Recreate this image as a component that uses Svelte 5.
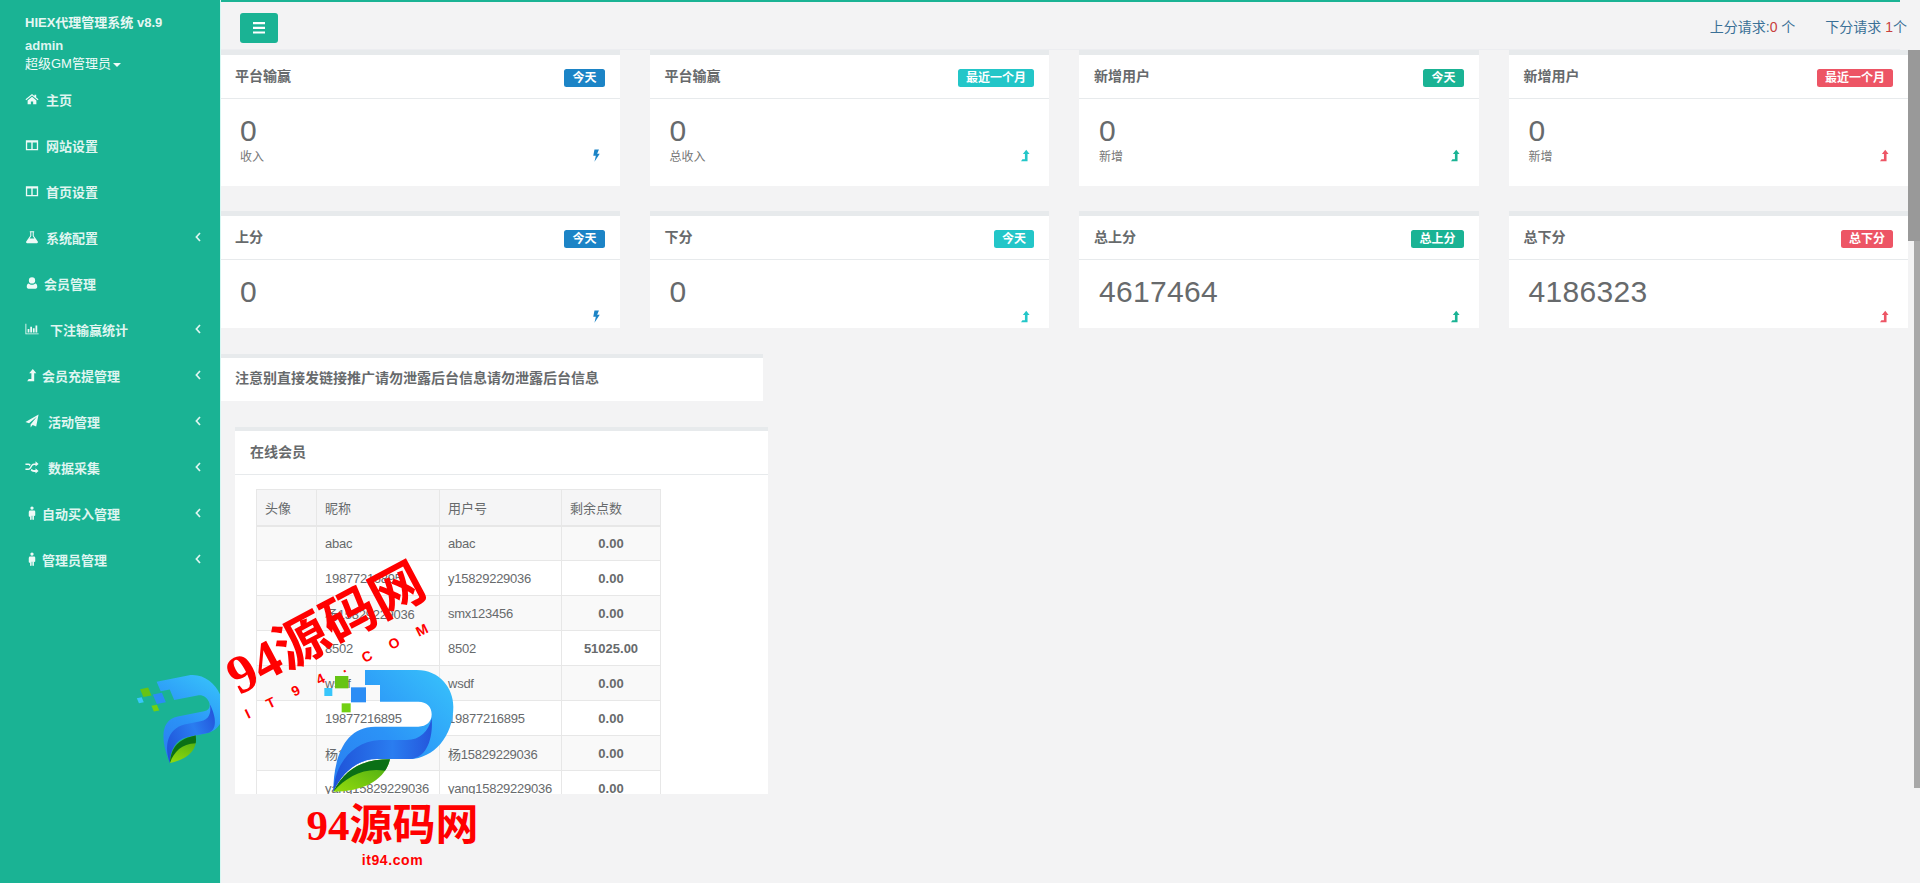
<script>
  const navItems = [
    { icon: 'home', label: '主页', gap: 7 },
    { icon: 'columns', label: '网站设置', gap: 7 },
    { icon: 'columns', label: '首页设置', gap: 7 },
    { icon: 'flask', label: '系统配置', gap: 7, arrow: true },
    { icon: 'user', label: '会员管理', gap: 5 },
    { icon: 'chart', label: '下注输赢统计', gap: 11, arrow: true },
    { icon: 'levelup', label: '会员充提管理', gap: 3, arrow: true },
    { icon: 'plane', label: '活动管理', gap: 9, arrow: true },
    { icon: 'random', label: '数据采集', gap: 9, arrow: true },
    { icon: 'male', label: '自动买入管理', gap: 3, arrow: true },
    { icon: 'male', label: '管理员管理', gap: 3, arrow: true }
  ];

  const topCards = [
    { title: '平台输赢', badge: '今天', tone: 'blue', value: '0', sub: '收入', icon: 'bolt' },
    { title: '平台输赢', badge: '最近一个月', tone: 'cyan', value: '0', sub: '总收入', icon: 'levelup' },
    { title: '新增用户', badge: '今天', tone: 'green', value: '0', sub: '新增', icon: 'levelup' },
    { title: '新增用户', badge: '最近一个月', tone: 'red', value: '0', sub: '新增', icon: 'levelup' }
  ];

  const bottomCards = [
    { title: '上分', badge: '今天', tone: 'blue', value: '0', icon: 'bolt' },
    { title: '下分', badge: '今天', tone: 'cyan', value: '0', icon: 'levelup' },
    { title: '总上分', badge: '总上分', tone: 'green', value: '4617464', icon: 'levelup' },
    { title: '总下分', badge: '总下分', tone: 'red', value: '4186323', icon: 'levelup' }
  ];

  const members = [
    { nick: 'abac', user: 'abac', points: '0.00' },
    { nick: '19877216895', user: 'y15829229036', points: '0.00' },
    { nick: '杨15829229036', user: 'smx123456', points: '0.00' },
    { nick: '8502', user: '8502', points: '51025.00' },
    { nick: 'wsdf', user: 'wsdf', points: '0.00' },
    { nick: '19877216895', user: '19877216895', points: '0.00' },
    { nick: '杨15829229036', user: '杨15829229036', points: '0.00' },
    { nick: 'yang15829229036', user: 'yang15829229036', points: '0.00' }
  ];
</script>

{#snippet icon(name, size = 14)}
  <svg class="ic" width={size} height={size} viewBox="0 0 16 16" fill="currentColor" aria-hidden="true">
    {#if name === 'home'}
      <path d="M8 2.2 .6 8.4l.8.9L8 3.9l6.6 5.4.8-.9L12.8 6.3V3h-2v1.600zM3 9.600V14h3.700v-3.200h2.600V14H13V9.600L8 5.500z" />
    {:else if name === 'columns'}
      <path fill-rule="evenodd" d="M1 2.500h14v11.500H1zM2.500 5v7.500h4.700V5zM8.800 5v7.500h4.700V5z" />
    {:else if name === 'flask'}
      <path fill-rule="evenodd" d="M5.500 1.500h5v1H10v4l4.600 6.700c.5.800 0 1.800-1 1.800H2.400c-1 0-1.500-1-1-1.800L6 6.500v-4h-.5zM7.200 2.500v4.400L5.300 9.800h5.400L8.800 6.900V2.500z" />
    {:else if name === 'user'}
      <path d="M8 1.500a3.500 3.500 0 1 1 0 7.200 3.500 3.500 0 0 1 0-7.200zM4.300 8.600C5.200 9.500 6.500 10 8 10s2.800-.5 3.700-1.400c1.500.3 2.300 1.700 2.300 3.800 0 1.200-.7 2.100-1.900 2.100H3.900C2.700 14.500 2 13.600 2 12.400c0-2.100.8-3.500 2.300-3.800z" />
    {:else if name === 'chart'}
      <path d="M.5 2h1v11h14v1H.5zM3 8h2v4H3zM6 5.500h2V12H6zM9 7h2v5H9zM12 4h2v8h-2z" />
    {:else if name === 'levelup'}
      <path d="M13 6H10.500V15H2.500L4.200 12.600H7.300V6H4.800L8.900 1z" />
    {:else if name === 'plane'}
      <path d="M15.500.5 12.800 14.300 8.700 12.500 6.400 15.300V12.100L13.500 3 4.600 10.700.5 9z" />
    {:else if name === 'random'}
      <path d="M12 1.500 15.500 4.500 12 7.500V5.700h-1.600c-1.200 0-2 1.100-2.700 2.300-.8 1.500-1.900 3.500-4 3.500H.5V9.700h3.100c1.100 0 1.900-1.100 2.600-2.400.9-1.500 1.900-3.400 4.100-3.400H12zM.5 3.900h3.200c1.200 0 2.100.5 2.800 1.300L5.400 7c-.5-.7-1-1.300-1.800-1.300H.5zM7.700 9.900c.6.800 1.500 1.400 2.600 1.400H12V9.500l3.500 3-3.500 3v-1.900h-1.600c-1.800 0-3-.8-3.900-1.900z" />
    {:else if name === 'male'}
      <path d="M8 .5a1.900 1.900 0 1 1 0 3.800A1.900 1.900 0 0 1 8 .5zM5.800 5h4.400c.9 0 1.500.6 1.500 1.500v4c0 .5-.4.8-.8.8s-.7-.3-.7-.7V15c0 .5-.4.9-.9.9s-.9-.4-.9-.9v-4h-.8v4c0 .5-.4.9-.9.9s-.9-.4-.9-.9v-3.400c0 .4-.3.7-.7.7s-.8-.3-.8-.8v-4C4.300 5.600 4.900 5 5.800 5z" />
    {:else if name === 'bolt'}
      <path d="M5.500 .5h5.500L8.800 5.800H12L5.500 15.800 7.200 8.300H4z" />
    {/if}
  </svg>
{/snippet}

{#snippet card(c)}
  <section class="ibox">
    <header class="ibox-title">
      <h5>{c.title}</h5>
      <span class="badge {c.tone}">{c.badge}</span>
    </header>
    <div class="ibox-content">
      <div class="value">{c.value}</div>
      {#if c.sub}<small>{c.sub}</small>{/if}
      <span class="stat {c.tone}">{@render icon(c.icon, 13)}</span>
    </div>
  </section>
{/snippet}

<div class="page">
  <aside class="sidebar">
    <div class="brand">HIEX代理管理系统 v8.9</div>
    <div class="who">admin</div>
    <div class="role">超级GM管理员<i class="caret"></i></div>
    <nav>
      {#each navItems as item}
        <a href="#top" class="nav-row">
          <span class="nav-ic">{@render icon(item.icon, 14)}</span>
          <span class="nav-label" style="margin-left:{item.gap}px">{item.label}</span>
          {#if item.arrow}
            <svg class="chev" width="6" height="10" viewBox="0 0 6 10" aria-hidden="true">
              <path d="M5 1 1.400 5 5 9" fill="none" stroke="currentColor" stroke-width="1.700" />
            </svg>
          {/if}
        </a>
      {/each}
    </nav>
  </aside>

  <main class="main">
    <div class="topbar">
      <button class="menu-btn" type="button" aria-label="菜单">
        <svg width="14" height="12" viewBox="0 0 14 12" aria-hidden="true">
          <path d="M1 0h12v2.200H1zM1 4.700h12v2.200H1zM1 9.400h12v2.200H1z" fill="currentColor" />
        </svg>
      </button>
      <div class="requests">
        <span>上分请求:<b>0</b> 个</span>
        <span>下分请求 <b>1</b>个</span>
      </div>
    </div>

    <div class="row row-top">
      {#each topCards as c}{@render card(c)}{/each}
    </div>
    <div class="row row-bottom">
      {#each bottomCards as c}{@render card(c)}{/each}
    </div>

    <section class="note">
      <h5>注意别直接发链接推广请勿泄露后台信息请勿泄露后台信息</h5>
    </section>

    <section class="online">
      <header class="online-title"><h5>在线会员</h5></header>
      <div class="online-body">
        <table>
          <thead>
            <tr><th>头像</th><th>昵称</th><th>用户号</th><th>剩余点数</th></tr>
          </thead>
          <tbody>
            {#each members as m}
              <tr>
                <td></td>
                <td>{m.nick}</td>
                <td>{m.user}</td>
                <td class="num">{m.points}</td>
              </tr>
            {/each}
          </tbody>
        </table>
      </div>
    </section>
  </main>

  <div class="scroll-track"></div>
  <div class="scroll-thumb"></div>

  <!-- site watermark laid over the page -->
  <div class="mark-diag">
    <div class="mark-cn">94源码网</div>
    <div class="mark-en">IT94.COM</div>
  </div>
  <svg class="logo logo-small" viewBox="0 0 110 110" aria-hidden="true">
    <g transform="matrix(.202 -.0405 .089 .212 4.600 23.300)">
      <use href="#p-logo" />
    </g>
  </svg>
  <svg class="logo logo-big" viewBox="0 0 510 420" aria-hidden="true">
    <defs>
      <linearGradient id="pBlue" x1="0" y1="1" x2="1" y2="0">
        <stop offset="0" stop-color="#2a7df0" />
        <stop offset=".45" stop-color="#2b93f7" />
        <stop offset="1" stop-color="#38c4fb" />
      </linearGradient>
      <linearGradient id="pBand" x1="0" y1="0" x2="1" y2="0">
        <stop offset="0" stop-color="#1f52d8" />
        <stop offset=".6" stop-color="#2a7df0" />
        <stop offset="1" stop-color="#2456dc" />
      </linearGradient>
      <linearGradient id="pLeaf" x1="0" y1="1" x2="1" y2="0">
        <stop offset="0" stop-color="#94dc0c" />
        <stop offset="1" stop-color="#46a815" />
      </linearGradient>
      <g id="p-logo">
        <path fill="url(#pBlue)" d="M195 30H350C420 30 460 85 460 140C460 230 400 295 330 297H230C170 297 125 340 100 395C100 300 130 200 225 200H355C380 200 395 185 395 163C395 140 380 125 355 125H240V75H195Z" />
        <path fill="url(#pBand)" d="M100 395C104 320 150 245 240 240H320C360 240 385 215 395 175C400 235 380 295 330 297H230C170 297 125 340 100 395Z" />
        <path fill="url(#pLeaf)" d="M100 395C135 325 190 298 270 298C255 360 190 395 100 395Z" />
        <path fill="#0b7016" d="M100 395C135 325 190 298 270 298C266 312 262 322 255 332C190 322 140 350 100 395Z" />
        <rect x="153" y="82" width="45" height="45" fill="#2b8df5" />
        <rect x="105" y="48" width="40" height="37" fill="#66c414" />
        <rect x="73" y="84" width="24" height="24" fill="#38c6fb" />
        <rect x="125" y="130" width="27" height="27" fill="#72d012" />
      </g>
    </defs>
    <use href="#p-logo" />
  </svg>
  <div class="mark-foot">
    <div class="foot-cn">94源码网</div>
    <div class="foot-en">it94.com</div>
  </div>
</div>

<style>
  :global(body) {
    margin: 0;
    background: #f3f3f4;
  }

  .page {
    position: relative;
    display: flex;
    height: 883px;
    overflow: hidden;
    font-family: "Liberation Sans", "Noto Sans CJK SC", sans-serif;
    font-size: 13px;
    color: #676a6c;
  }

  .sidebar {
    flex: 0 0 220px;
    box-sizing: border-box;
    padding: 15px 0 0 25px;
    background: #1ab394;
    color: #dff5f0;
    font-weight: 600;
  }

  .brand {
    height: 16px;
    line-height: 16px;
    color: #e6f7f3;
    font-weight: 700;
  }

  .who {
    margin-top: 7px;
    line-height: 15px;
  }

  .role {
    margin-top: 2px;
    line-height: 17px;
    font-weight: 400;
    color: #f0fbf8;
  }

  .caret {
    display: inline-block;
    margin-left: 2px;
    vertical-align: middle;
    border-top: 4px solid currentColor;
    border-left: 4px solid transparent;
    border-right: 4px solid transparent;
  }

  nav {
    margin-top: 4px;
  }

  .nav-row {
    display: flex;
    align-items: center;
    height: 46px;
    padding-right: 19px;
    color: inherit;
    text-decoration: none;
  }

  .nav-ic {
    display: flex;
    color: #eefaf7;
  }

  .ic {
    display: block;
  }

  .chev {
    margin-left: auto;
  }

  .main {
    position: relative;
    flex: 1;
    min-width: 0;
    padding-right: 12px;
  }

  /* faint pale line where the content meets the sidebar */
  .main::before {
    content: "";
    position: absolute;
    left: 0;
    top: 0;
    bottom: 0;
    width: 1px;
    background: #d6f7f2;
  }

  .topbar {
    display: flex;
    align-items: center;
    justify-content: space-between;
    box-sizing: border-box;
    height: 50px;
    margin-right: 8px;
    padding: 0 0 0 20px;
    border-top: 2px solid #1ab394;
    border-bottom: 1px solid #ecedf0;
  }

  .menu-btn {
    display: flex;
    align-items: center;
    justify-content: center;
    width: 38px;
    height: 30px;
    margin-top: 5px;
    padding: 0;
    border: 0;
    border-radius: 3px;
    background: #1ab394;
    color: #fff;
  }

  .requests {
    display: flex;
    gap: 30px;
    margin-right: -7px;
    font-size: 14px;
    color: #3a7096;
  }

  .requests b {
    font-weight: 400;
    color: #c8403c;
  }

  .row {
    display: grid;
    grid-template-columns: repeat(4, 399.5px);
    column-gap: 30px;
  }

  .row-top {
    height: 136px;
  }

  .row-bottom {
    height: 117px;
    margin-top: 25px;
  }

  .ibox {
    display: flex;
    flex-direction: column;
    box-sizing: border-box;
    border-top: 5px solid #e7eaec;
    background: #fff;
    overflow: hidden;
  }

  .ibox-title {
    display: flex;
    flex: 0 0 44px;
    align-items: center;
    justify-content: space-between;
    box-sizing: border-box;
    padding: 0 15px;
    border-bottom: 1px solid #e7eaec;
  }

  h5 {
    margin: 0;
    font-size: 14px;
    font-weight: 600;
    color: #676a6c;
  }

  .ibox-title h5 {
    margin-top: -4px;
  }

  .badge {
    box-sizing: border-box;
    margin-top: 3px;
    padding: 0 8px;
    height: 18px;
    line-height: 18px;
    border-radius: 2.5px;
    font-size: 12px;
    font-weight: 700;
    color: #fff;
  }

  .row-bottom .badge {
    margin-top: 2px;
  }

  .badge.blue { background: #1c84c6; }
  .badge.cyan { background: #23c6c8; }
  .badge.green { background: #1ab394; }
  .badge.red { background: #ed5565; }

  .stat.blue { color: #1c84c6; }
  .stat.cyan { color: #23c6c8; }
  .stat.green { color: #1ab394; }
  .stat.red { color: #ed5565; }

  .ibox-content {
    position: relative;
    flex: 1;
    padding: 15px 20px 0;
  }

  .value {
    font-size: 30px;
    line-height: 33px;
    letter-spacing: .3px;
    color: #676a6c;
  }

  small {
    display: block;
    margin-top: 3px;
    font-size: 12px;
    line-height: 15px;
    color: #777;
  }

  .stat {
    position: absolute;
    right: 17px;
    top: 50px;
  }

  .note {
    display: flex;
    align-items: center;
    box-sizing: border-box;
    width: 543px;
    height: 47px;
    margin-top: 26px;
    padding: 0 15px 5px;
    border-top: 4px solid #e7eaec;
    background: #fff;
  }

  .online {
    box-sizing: border-box;
    width: 533px;
    height: 367px;
    margin: 26px 0 0 15px;
    border-top: 4px solid #e7eaec;
    background: #fff;
    overflow: hidden;
  }

  .online-title {
    display: flex;
    align-items: center;
    box-sizing: border-box;
    height: 44px;
    padding: 0 15px 4px;
    border-bottom: 1px solid #e7eaec;
  }

  .online-body {
    padding: 14px 0 0 21px;
  }

  table {
    width: 405px;
    table-layout: fixed;
    border-collapse: collapse;
    border: 1px solid #e7e7e7;
    font-size: 13px;
  }

  th, td {
    box-sizing: border-box;
    height: 35px;
    padding: 0 8px;
    border: 1px solid #e7e7e7;
    text-align: left;
    font-weight: 400;
    white-space: nowrap;
    overflow: hidden;
  }

  td {
    letter-spacing: -.25px;
  }

  th {
    height: 36px;
    background: #f5f5f6;
    border-bottom-width: 2px;
  }

  th:nth-child(1) { width: 60px; }
  th:nth-child(2) { width: 123px; }
  th:nth-child(3) { width: 122px; }

  tbody tr:nth-child(odd) {
    background: #f9f9f9;
  }

  td.num {
    padding: 0;
    text-align: center;
    font-weight: 700;
    letter-spacing: 0;
  }

  .scroll-thumb {
    position: absolute;
    top: 50px;
    right: 0;
    width: 12px;
    height: 191px;
    background: #999;
  }

  .scroll-track {
    position: absolute;
    top: 241px;
    right: 0;
    width: 6px;
    height: 547px;
    background: #a8a8a8;
  }

  .mark-diag {
    position: absolute;
    left: 217px;
    top: 654px;
    transform: rotate(-28deg);
    transform-origin: left top;
    color: #f00;
    font-family: "Liberation Serif", "Noto Sans CJK SC", serif;
    pointer-events: none;
  }

  .mark-cn {
    font-size: 54px;
    line-height: 58px;
    font-weight: 700;
    white-space: nowrap;
  }

  .mark-en {
    margin: 2px 0 0 -3px;
    transform: rotate(2.3deg);
    transform-origin: left center;
    font-family: "Liberation Sans", sans-serif;
    font-size: 14px;
    line-height: 14px;
    letter-spacing: 19.5px;
    font-weight: 700;
    white-space: nowrap;
  }

  .logo {
    position: absolute;
    pointer-events: none;
  }

  .logo-small {
    left: 110px;
    top: 660px;
    width: 110px;
    height: 110px;
  }

  .logo-big {
    left: 300px;
    top: 660px;
    width: 170px;
    height: 140px;
  }

  .mark-foot {
    position: absolute;
    left: 295px;
    top: 803px;
    width: 195px;
    text-align: center;
    color: #f00;
    pointer-events: none;
  }

  .foot-cn {
    font-family: "Liberation Serif", "Noto Sans CJK SC", serif;
    font-size: 43px;
    line-height: 46px;
    font-weight: 700;
    white-space: nowrap;
  }

  .foot-en {
    margin-top: 3px;
    font-size: 14px;
    line-height: 16px;
    font-weight: 700;
    letter-spacing: .6px;
  }
</style>
